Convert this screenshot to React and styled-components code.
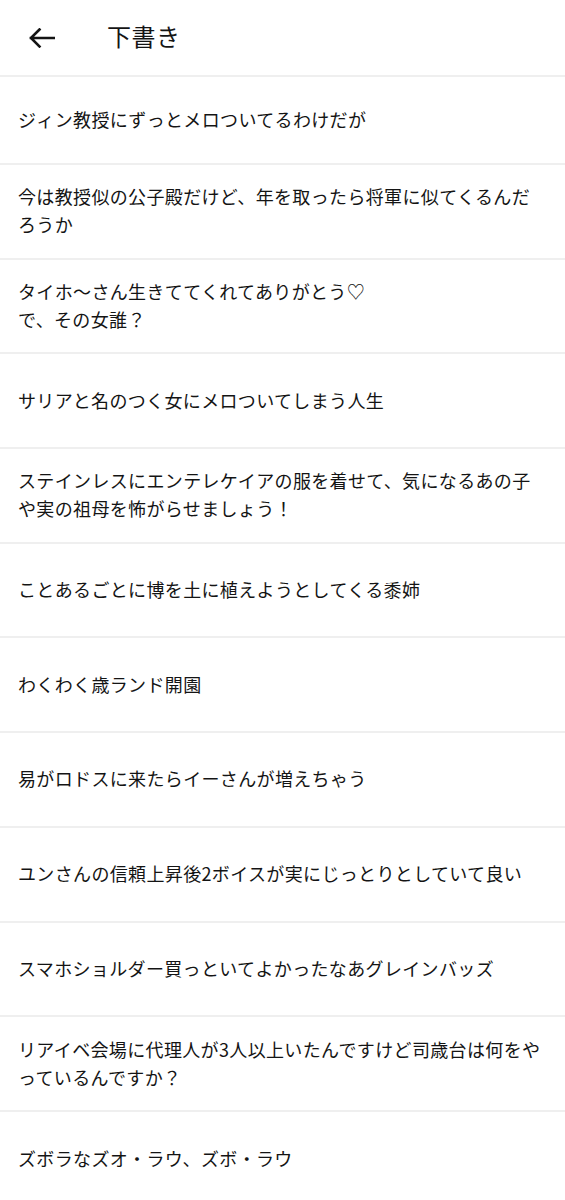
import React from "react"
import styled, { createGlobalStyle } from "styled-components"

const GlobalStyle = createGlobalStyle`
  html, body {
    margin: 0;
    padding: 0;
    background: #ffffff;
  }
  body {
    font-family: "Noto Sans CJK JP", "Noto Sans", sans-serif;
    color: #141414;
  }
`

const drafts = [
  "ジィン教授にずっとメロついてるわけだが",
  "今は教授似の公子殿だけど、年を取ったら将軍に似てくるんだろうか",
  "タイホ〜さん生きててくれてありがとう♡\nで、その女誰？",
  "サリアと名のつく女にメロついてしまう人生",
  "ステインレスにエンテレケイアの服を着せて、気になるあの子や実の祖母を怖がらせましょう！",
  "ことあるごとに博を土に植えようとしてくる黍姉",
  "わくわく歳ランド開園",
  "易がロドスに来たらイーさんが増えちゃう",
  "ユンさんの信頼上昇後2ボイスが実にじっとりとしていて良い",
  "スマホショルダー買っといてよかったなあグレインバッズ",
  "リアイベ会場に代理人が3人以上いたんですけど司歳台は何をやっているんですか？",
  "ズボラなズオ・ラウ、ズボ・ラウ",
]

const Page = styled.div`
  width: 565px;
  min-height: 1200px;
  background: #ffffff;
  overflow: hidden;
`

const Header = styled.header`
  display: flex;
  align-items: center;
  height: 75px;
  padding-left: 28px;
  border-bottom: 2px solid #efefef;
`

const BackButton = styled.button`
  display: flex;
  align-items: center;
  justify-content: center;
  width: 28px;
  height: 28px;
  padding: 0;
  border: none;
  background: none;
  color: #141414;
`

const Title = styled.h1`
  margin: 0 0 5px 51px;
  font-size: 24px;
  font-weight: 400;
  letter-spacing: 0.5px;
  color: #141414;
`

const List = styled.ul`
  list-style: none;
  margin: 0;
  padding: 0;
`

const Row = styled.li`
  box-sizing: border-box;
  display: flex;
  align-items: center;
  height: ${(p) => (p.$first ? "88px" : "94.7px")};
  padding: 0 20px 2px 18px;
  border-bottom: 2px solid #efefef;
  font-size: 18px;
  line-height: 28px;
  letter-spacing: 0.35px;
  white-space: pre-line;
  color: #141414;

  &:last-child {
    border-bottom: none;
  }
`

const ArrowIcon = () => (
  <svg width="26" height="20" viewBox="0 0 26 20" fill="none">
    <path
      d="M2 10H25M2 10L10.5 1.5M2 10L10.5 18.5"
      stroke="currentColor"
      strokeWidth="2.6"
      strokeLinecap="square"
    />
  </svg>
)

const App = () => {
  return (
    <Page>
      <GlobalStyle />
      <Header>
        <BackButton aria-label="戻る">
          <ArrowIcon />
        </BackButton>
        <Title>下書き</Title>
      </Header>
      <List>
        {drafts.map((text, i) => (
          <Row key={i} $first={i === 0}>
            {text}
          </Row>
        ))}
      </List>
    </Page>
  )
}

export default App
